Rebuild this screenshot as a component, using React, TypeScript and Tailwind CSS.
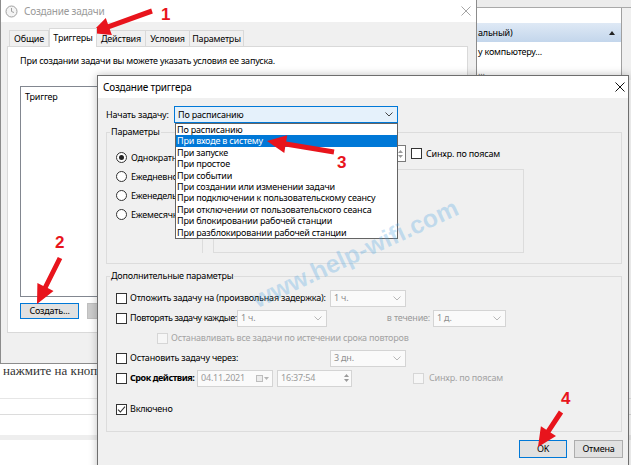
import React from 'react';

const RED = '#e8141c';

function arrowPts(x1: number, y1: number, x2: number, y2: number, w = 5, hl = 19, hw = 9) {
  const dx = x2 - x1;
  const dy = y2 - y1;
  const len = Math.hypot(dx, dy);
  const ux = dx / len;
  const uy = dy / len;
  const px = -uy;
  const py = ux;
  const bx = x2 - ux * hl;
  const by = y2 - uy * hl;
  const pts = [
    [x1 + (px * w) / 2, y1 + (py * w) / 2],
    [bx + (px * w) / 2, by + (py * w) / 2],
    [bx + px * hw, by + py * hw],
    [x2, y2],
    [bx - px * hw, by - py * hw],
    [bx - (px * w) / 2, by - (py * w) / 2],
    [x1 - (px * w) / 2, y1 - (py * w) / 2],
  ];
  return pts.map((p) => p.map((n) => n.toFixed(1)).join(',')).join(' ');
}

function Chevron({ c = '#555' }: { c?: string }) {
  return (
    <svg width="8" height="5" viewBox="0 0 8 5">
      <path d="M0.5 0.5 L4 4 L7.5 0.5" fill="none" stroke={c} strokeWidth="1" />
    </svg>
  );
}

function CloseX({ c }: { c: string }) {
  return (
    <svg width="10" height="10" viewBox="0 0 10 10">
      <path d="M0.5 0.5 L9.5 9.5 M9.5 0.5 L0.5 9.5" stroke={c} strokeWidth="1" />
    </svg>
  );
}

function Box({ checked = false, disabled = false }: { checked?: boolean; disabled?: boolean }) {
  return (
    <span
      className={`w-[11px] h-[11px] shrink-0 border flex items-center justify-center ${
        disabled ? 'border-[#d6d6d6] bg-[#f6f6f6]' : 'border-[#333333] bg-white'
      }`}
    >
      {checked && (
        <svg width="9" height="9" viewBox="0 0 9 9">
          <path d="M1 4.6 L3.4 7 L8 1.6" fill="none" stroke="#333" strokeWidth="1.1" />
        </svg>
      )}
    </span>
  );
}

function Radio({ on = false }: { on?: boolean }) {
  return (
    <span className="w-[11px] h-[11px] shrink-0 rounded-full border border-[#333333] bg-white flex items-center justify-center">
      {on && <span className="w-[5px] h-[5px] rounded-full bg-[#222222]" />}
    </span>
  );
}

function Combo({ w, text }: { w: string; text: string }) {
  return (
    <div className={`${w} h-[17px] shrink-0 border border-[#d4d4d4] bg-[#fafafa] flex items-center justify-between pl-[3px] pr-[4px] text-[#8f8f8f]`}>
      <span>{text}</span>
      <Chevron c="#b8b8b8" />
    </div>
  );
}

function Spinner() {
  return (
    <div className="flex flex-col items-center justify-center gap-[2px] w-[7px]">
      <svg width="5" height="3" viewBox="0 0 5 3"><path d="M0 3 L2.5 0 L5 3Z" fill="#9a9a9a" /></svg>
      <svg width="5" height="3" viewBox="0 0 5 3"><path d="M0 0 L2.5 3 L5 0Z" fill="#9a9a9a" /></svg>
    </div>
  );
}

const triggers = [
  'По расписанию',
  'При входе в систему',
  'При запуске',
  'При простое',
  'При событии',
  'При создании или изменении задачи',
  'При подключении к пользовательскому сеансу',
  'При отключении от пользовательского сеанса',
  'При блокировании рабочей станции',
  'При разблокировании рабочей станции',
];

export default function App() {
  return (
    <div className="relative w-[631px] h-[465px] overflow-hidden bg-white font-['Noto_Sans',sans-serif] text-[9px] leading-[12px] tracking-[-0.2px] text-black">
      {/* web page behind the windows */}
      <div className="pt-[364px] flex flex-col">
        <div className="pl-[3px] h-[13px] font-['Liberation_Serif',serif] text-[13px] leading-[13px] tracking-normal text-[#333]">нажмите на кнопку</div>
        <div className="mt-[21px] h-px bg-[#e6e6e6]" />
        <div className="mt-[15px] h-px bg-[#dcdcdc]" />
        <div className="mt-[20px] h-[5px] bg-[#eeeeee]" />
      </div>

      {/* window on the right */}
      <div className="absolute left-[477px] top-0 w-[154px] h-[80px] flex flex-col bg-[#f0f0f0]">
        <div className="h-[8px] border-b border-[#a9a9a9] bg-[#ececec]" />
        <div className="flex flex-1">
          <div className="w-[145px] bg-white border-r border-[#a0a0a0] pt-[15px] flex flex-col">
            <div className="h-[19px] bg-gradient-to-b from-[#dfe9f5] to-[#c3d6ec] flex items-center justify-between pl-[1px] pr-[6px]">
              <span>альный)</span>
              <svg width="6" height="4" viewBox="0 0 6 4"><path d="M0 4 L3 0 L6 4Z" fill="#222" /></svg>
            </div>
            <div className="mt-[4px] pl-[1px]">у компьютеру...</div>
            <div className="mt-[8px] pl-[1px] text-[#666]">...</div>
          </div>
        </div>
      </div>

      {/* back window: Создание задачи */}
      <div className="absolute left-0 top-0 w-[477px] h-[364px] border-r border-b border-l border-[#8c8c8c] bg-[#f0f0f0] flex flex-col">
        <div className="h-[22px] bg-white flex items-center pl-[4px] pr-[4px]">
          <svg width="13" height="13" viewBox="0 0 13 13">
            <circle cx="6.5" cy="6.5" r="5.5" fill="#f4f4f4" stroke="#a0a0a0" />
            <path d="M6.5 3 L6.5 6.5 L9 7.5" fill="none" stroke="#a0a0a0" strokeWidth="1" />
          </svg>
          <span className="ml-[6px] text-[10px] text-[#9a9a9a]">Создание задачи</span>
          <span className="ml-auto mr-[1px]"><CloseX c="#a5a5a5" /></span>
        </div>
        <div className="h-[24px] flex items-end pl-[8px]">
          <div className="w-[40px] h-[16px] border border-b-0 border-[#d9d9d9] flex items-center justify-center">Общие</div>
          <div className="w-[48px] h-[19px] border border-b-0 border-[#d9d9d9] bg-white -mb-px z-10 flex items-center justify-center">Триггеры</div>
          <div className="w-[49px] h-[16px] border border-b-0 border-l-0 border-[#d9d9d9] flex items-center justify-center">Действия</div>
          <div className="w-[44px] h-[16px] border border-b-0 border-l-0 border-[#d9d9d9] flex items-center justify-center">Условия</div>
          <div className="w-[54px] h-[16px] border border-b-0 border-l-0 border-[#d9d9d9] flex items-center justify-center">Параметры</div>
        </div>
        <div className="ml-[6px] w-[461px] h-[287px] bg-white border border-[#d9d9d9] pl-[12px] pt-[8px] flex flex-col">
          <div>При создании задачи вы можете указать условия ее запуска.</div>
          <div className="mt-[19px] w-[440px] h-[211px] border border-[#828790] pl-[4px] pt-[4px]">Триггер</div>
          <div className="mt-[6px] flex gap-[8px]">
            <div className="w-[59px] h-[16px] bg-[#e1e1e1] border border-[#0078d7] flex items-center justify-center">Создать...</div>
            <div className="w-[70px] h-[16px] bg-[#cccccc] border border-[#bfbfbf]" />
          </div>
        </div>
      </div>

      {/* front dialog: Создание триггера */}
      <div className="absolute left-[97px] top-[75px] w-[532px] h-[400px] border border-[#6e6e6e] bg-[#f0f0f0] shadow-[0_0_8px_rgba(0,0,0,0.25)] flex flex-col">
        <div className="h-[22px] bg-white flex items-center pl-[5px] pr-[3px]">
          <span className="text-[10px]">Создание триггера</span>
          <span className="ml-auto"><CloseX c="#111" /></span>
        </div>
        <div className="pl-[8px] pt-[8px] flex flex-col">
          <div className="flex items-center h-[17px]">
            <span className="w-[68px]">Начать задачу:</span>
            <div className="w-[224px] h-[17px] bg-[#e5f1fb] border border-[#0078d7] flex items-center justify-between pl-[3px] pr-[4px]">
              <span>По расписанию</span>
              <Chevron c="#444" />
            </div>
          </div>

          {/* Параметры */}
          <div className="relative mt-[9px] w-[516px] h-[132px] border border-[#dcdcdc] flex">
            <span className="absolute left-[3px] -top-[7px] px-[1px] bg-[#f0f0f0]">Параметры</span>
            <div className="w-[95px] pl-[9px] pt-[19px] flex flex-col gap-[8px]">
              {['Однократно', 'Ежедневно', 'Еженедельно', 'Ежемесячно'].map((t, i) => (
                <div key={t} className="h-[11px] flex items-center gap-[4px] whitespace-nowrap">
                  <Radio on={i === 0} />
                  <span>{t}</span>
                </div>
              ))}
            </div>
            <div className="mt-[12px] w-px h-[108px] bg-[#dcdcdc]" />
            <div className="pl-[10px] pt-[12px] flex flex-col">
              <div className="h-[17px] flex items-center">
                <span className="w-[49px]">Начать:</span>
                <div className="w-[64px] h-[17px] bg-white border border-[#7a7a7a] pl-[3px] flex items-center">04.11.2021</div>
                <div className="ml-[4px] w-[76px] h-[17px] bg-white border border-[#7a7a7a] pl-[3px] pr-[1px] flex items-center justify-between">
                  <span>16:37:54</span>
                  <Spinner />
                </div>
                <span className="ml-[5px]"><Box /></span>
                <span className="ml-[4px] whitespace-nowrap">Синхр. по поясам</span>
              </div>
              <div className="mt-[7px] w-[311px] h-[84px] border border-[#dcdcdc]" />
            </div>
          </div>

          {/* Дополнительные параметры */}
          <div className="relative mt-[12px] w-[516px] h-[156px] border border-[#dcdcdc] pl-[9px] pt-[11px] flex flex-col">
            <span className="absolute left-[3px] -top-[7px] px-[1px] bg-[#f0f0f0]">Дополнительные параметры</span>
            <div className="h-[20px] flex items-center">
              <div className="w-[214px] flex items-center gap-[3px] whitespace-nowrap">
                <Box />
                <span>Отложить задачу на (произвольная задержка):</span>
              </div>
              <Combo w="w-[76px]" text="1 ч." />
            </div>
            <div className="h-[20px] flex items-center">
              <div className="w-[121px] flex items-center gap-[3px] whitespace-nowrap">
                <Box />
                <span className="tracking-[-0.4px]">Повторять задачу каждые:</span>
              </div>
              <Combo w="w-[90px]" text="1 ч." />
              <span className="w-[106px] text-right pr-[3px] text-[#9a9a9a]">в течение:</span>
              <Combo w="w-[73px]" text="1 д." />
            </div>
            <div className="h-[20px] flex items-center pl-[41px] gap-[3px] text-[#a3a3a3] whitespace-nowrap">
              <Box disabled />
              <span>Останавливать все задачи по истечении срока повторов</span>
            </div>
            <div className="h-[20px] flex items-center">
              <div className="w-[214px] flex items-center gap-[3px] whitespace-nowrap">
                <Box />
                <span>Остановить задачу через:</span>
              </div>
              <Combo w="w-[76px]" text="3 дн." />
            </div>
            <div className="h-[20px] flex items-center">
              <div className="w-[81px] flex items-center gap-[3px] whitespace-nowrap">
                <Box />
                <span className="font-bold tracking-[-0.45px]">Срок действия:</span>
              </div>
              <div className="w-[76px] h-[17px] border border-[#d4d4d4] bg-[#fafafa] pl-[3px] pr-[3px] flex items-center justify-between text-[#9a9a9a]">
                <span>04.11.2021</span>
                <span className="flex items-center gap-[1px]">
                  <span className="w-[7px] h-[7px] border border-[#bdbdbd] bg-[#ececec]" />
                  <svg width="5" height="3" viewBox="0 0 5 3"><path d="M0 0 L2.5 3 L5 0Z" fill="#b5b5b5" /></svg>
                </span>
              </div>
              <div className="ml-[4px] w-[75px] h-[17px] border border-[#d4d4d4] bg-[#fafafa] pl-[3px] pr-[1px] flex items-center justify-between text-[#9a9a9a]">
                <span>16:37:54</span>
                <Spinner />
              </div>
              <span className="ml-[61px]"><Box disabled /></span>
              <span className="ml-[5px] text-[#a3a3a3] whitespace-nowrap">Синхр. по поясам</span>
            </div>
            <div className="mt-[11px] h-[20px] flex items-center gap-[3px]">
              <Box checked />
              <span>Включено</span>
            </div>
          </div>

          <div className="mt-[8px] w-[517px] flex justify-end gap-[7px]">
            <div className="w-[48px] h-[18px] bg-[#e1e1e1] border border-[#0078d7] flex items-center justify-center">OK</div>
            <div className="w-[49px] h-[18px] bg-[#e1e1e1] border border-[#adadad] flex items-center justify-center">Отмена</div>
          </div>
        </div>
      </div>

      {/* open dropdown list */}
      <div className="absolute left-[175px] top-[123px] w-[223px] border border-[#646464] bg-white flex flex-col">
        {triggers.map((t, i) => (
          <div
            key={t}
            className={`h-[11.4px] leading-[11.4px] pl-[1px] whitespace-nowrap ${i === 1 ? 'bg-[#0078d7] text-white' : ''}`}
          >
            {t}
          </div>
        ))}
      </div>

      {/* watermark */}
      <div className="absolute left-[230px] top-[238px] w-[250px] text-center rotate-[-25deg] font-['Liberation_Sans',sans-serif] font-bold text-[25px] leading-[30px] tracking-normal text-[rgba(70,160,225,0.28)] pointer-events-none">
        www.help-wifi.com
      </div>

      {/* red arrows and numbers */}
      <svg className="absolute left-0 top-0 pointer-events-none" width="631" height="465" viewBox="0 0 631 465">
        <polygon points={arrowPts(152, 11, 91, 33)} fill={RED} />
        <polygon points={arrowPts(60, 258, 37, 304)} fill={RED} />
        <polygon points={arrowPts(334, 152, 267, 141)} fill={RED} />
        <polygon points={arrowPts(561, 412, 538, 447)} fill={RED} />
        <g fill={RED} fontFamily="Liberation Sans, sans-serif" fontWeight="bold" fontSize="17">
          <text x="161" y="20">1</text>
          <text x="55" y="248">2</text>
          <text x="337" y="168">3</text>
          <text x="561" y="404">4</text>
        </g>
      </svg>
    </div>
  );
}
